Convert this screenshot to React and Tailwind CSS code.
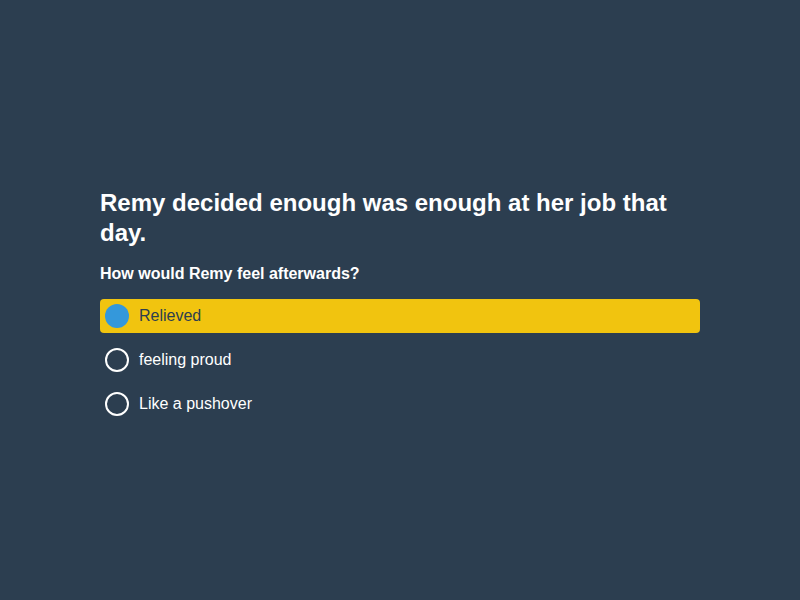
import { useState } from "react";

const options = ["Relieved", "feeling proud", "Like a pushover"];

export default function App() {
  const [selected, setSelected] = useState(0);

  return (
    <div
      className="min-h-screen bg-[#2c3e50] flex items-center justify-center pt-[9px]"
      style={{ fontFamily: '"Liberation Sans", Arial, sans-serif' }}
    >
      <div className="w-[600px]">
        <h1 className="text-[24px] leading-[30px] font-bold text-white">
          Remy decided enough was enough at her job that day.
        </h1>
        <h2 className="mt-[16px] text-[16px] leading-[20px] font-bold text-white">
          How would Remy feel afterwards?
        </h2>
        <div className="mt-[15px] flex flex-col gap-[10px]">
          {options.map((opt, i) => {
            const active = selected === i;
            return (
              <button
                key={opt}
                onClick={() => setSelected(i)}
                className={`flex items-center h-[34px] pl-[5px] rounded text-left ${
                  active ? "bg-[#f1c40f] text-[#2c3e50]" : "text-white"
                }`}
              >
                <span
                  className={`w-6 h-6 rounded-full flex-shrink-0 ${
                    active ? "bg-[#3498db]" : "border-2 border-white"
                  }`}
                />
                <span className="ml-[10px] text-[16px]">{opt}</span>
              </button>
            );
          })}
        </div>
      </div>
    </div>
  );
}
